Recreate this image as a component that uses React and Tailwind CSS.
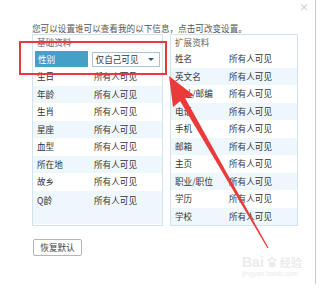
import React from "react";

const font = { fontFamily: '"Noto Sans CJK SC", "Noto Sans", sans-serif' };

const basic = ["生日", "年龄", "生肖", "星座", "血型", "所在地", "故乡"];
const extra = ["姓名", "英文名", "地址/邮编", "电话", "手机", "邮箱", "主页", "职业/职位", "学历", "学校"];

function Row({ label, light, className = "h-[17.5px]", labelW = "w-[58px]" }) {
  return (
    <div className={`flex items-center ${className} ${light ? "bg-[#eef7fc]" : "bg-white"}`}>
      <span className={`${labelW} pl-[4px] shrink-0`}>{label}</span>
      <span>所有人可见</span>
    </div>
  );
}

export default function App() {
  return (
    <div
      className="relative w-[320px] h-[288px] overflow-hidden bg-white text-[8.6px] leading-none text-[#333]"
      style={font}
    >
      {/* dialog edge */}
      <div className="absolute right-[4px] top-0 h-[284px] w-px bg-[#c9c9c9]" />
      <span className="absolute right-[11px] top-[2px] text-[10px] leading-none text-[#c4c4c4]">×</span>

      <div className="pl-[32px] pt-[24px]">
        <p className="text-[#555] h-[10px]">您可以设置谁可以查看我的以下信息，点击可改变设置。</p>

        <div className="flex gap-[7px]">
          {/* 基础资料 */}
          <div className="w-[131px] border border-[#d3e3ee]">
            <div className="h-[15px] flex items-center pl-[4px] text-[#666]">基础资料</div>
            <div className="h-[18px] flex items-center gap-[4px] px-[2px] bg-white">
              <span className="w-[53px] h-[16px] flex items-center pl-[3px] bg-[#44a0c8] text-white">性别</span>
              <span className="w-[69px] h-[15px] flex items-center justify-between px-[3px] border border-[#a7c4d6] bg-white">
                仅自己可见
                <span className="w-0 h-0 border-x-[3px] border-x-transparent border-t-[3px] border-t-[#2f5f80] mr-[2px]" />
              </span>
            </div>
            {basic.map((b, i) => (
              <Row key={b} label={b} light={i % 2 === 1} labelW="w-[61px]" />
            ))}
            <div className="h-[33.5px] bg-[#eef7fc] pt-[5px] flex">
              <span className="w-[61px] pl-[4px] shrink-0">Q龄</span>
              <span>所有人可见</span>
            </div>
          </div>

          {/* 扩展资料 */}
          <div className="w-[128px] border border-[#d3e3ee]">
            <div className="h-[15px] flex items-center pl-[4px] text-[#666]">扩展资料</div>
            {extra.map((b, i) => (
              <Row key={b} label={b} light={i % 2 === 1} />
            ))}
          </div>
        </div>

        <button className="mt-[13px] ml-[1px] w-[49px] h-[17px] border border-[#b5b5b5] rounded-[2px] bg-white text-[#444] flex items-center justify-center">
          恢复默认
        </button>
      </div>

      {/* red highlight box */}
      <div className="absolute left-[19px] top-[41px] w-[148px] h-[34px] border-2 border-[#e8393c]" />

      {/* watermark */}
      <div className="absolute left-[242px] top-[255px] text-[#ebebeb]">
        <div className="flex items-center gap-[2px] text-[14px] font-bold" style={{ fontFamily: '"Liberation Sans", sans-serif' }}>
          <span>Bai</span>
          <svg width="12" height="12" viewBox="0 0 12 12" fill="#ebebeb">
            <circle cx="3" cy="4" r="1.5" />
            <circle cx="6" cy="2.5" r="1.5" />
            <circle cx="9" cy="4" r="1.5" />
            <ellipse cx="6" cy="8.5" rx="3.5" ry="3" />
          </svg>
          <span style={font} className="text-[11px]">经验</span>
        </div>
        <div className="text-[7px] mt-[1px]" style={{ fontFamily: '"Liberation Sans", sans-serif' }}>jingyan.baidu.com</div>
      </div>

      {/* red arrow */}
      <svg className="absolute inset-0" width="320" height="288" viewBox="0 0 320 288">
        <polygon points="184.5,97 179.5,100 267.5,248.3 268.5,247.7" fill="#ea3a3a" />
        <polygon points="169,76 194,95.5 183,99 173,107" fill="#ea3a3a" />
      </svg>
    </div>
  );
}
